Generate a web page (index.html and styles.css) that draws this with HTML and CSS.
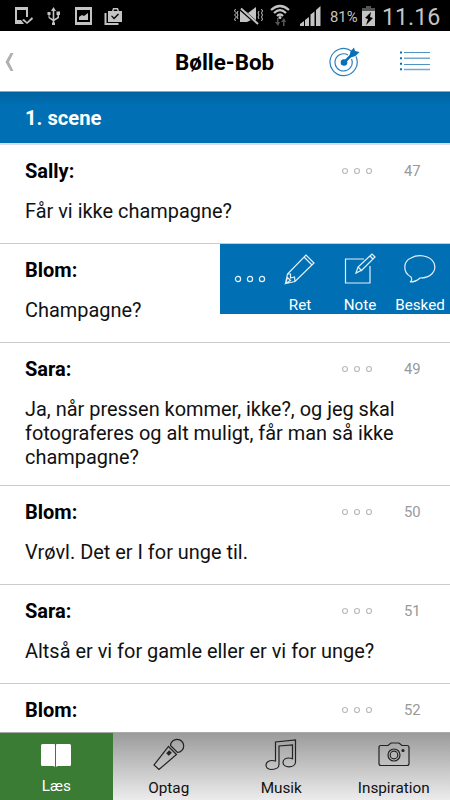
FILE: index.html
```html
<!DOCTYPE html>
<html lang="da">
<head>
<meta charset="utf-8">
<meta name="viewport" content="width=device-width">
<title>Bølle-Bob</title>
<link rel="stylesheet" href="styles.css">
</head>
<body>
<div class="status">
  <svg class="status-left" width="125" height="31" viewBox="0 0 125 31" fill="#c4c4c4">
    <path d="M15 7h13v10h-2V10h-9v10h4l3 4h-9zM22 20l2-1 3 3 5-5 1 2-6 5z"/>
    <path d="M53.500 7l2.500 4h-1.700v8l3.200-2v-2h-1v-3.500h3.500V15h-1v3l-4.700 3v1.500h.7v2.500h-3v-2.500h.7V21L48.500 18v-3h-1v-3h3v3h-1v2l3.200 2v-8H51z"/>
    <path fill-rule="evenodd" d="M75 7h17v18H75zM77 10v12h13V10zM79 20v-3l3-2 2 1 4-3v7z"/>
    <path fill-rule="evenodd" d="M108 11h4l1-3h5l1 3h3v11h-14zM113.500 11h4l-.5-1.500h-3zM111 16l3 3.500 5-5-1-1-4 4-2-2z"/>
    <path d="M104.500 13h2v10h12v2h-14z"/>
  </svg>
  <svg class="status-right" width="93" height="31" viewBox="232 0 93 31" fill="#c4c4c4">
    <path d="M240 11h5l3 2 8-6v15l-5-2-4 2h-7z"/>
    <path d="M240 8.500l17 15" stroke="#000" stroke-width="3.500"/>
    <path d="M241 8.500l17 15.500" stroke="#c4c4c4" stroke-width="2"/>
    <path d="M235.500 9l-1 2 2 2-2 2 2 2-2 2 1 2M238 11l-1 2 1 2-1 2 1 2M259 11l-1 2 1 2-1 2 1 2M261.500 9l1 2-1 2 1 2-1 2 1 2-1 2" fill="none" stroke="#c4c4c4"/>
    <path d="M271 10q9-8 18 0M274 13q6-6 12 0M277 16q3-3 6 0" fill="none" stroke="#c4c4c4" stroke-width="2.200"/>
    <circle cx="280" cy="17.500" r="1.500"/>
    <path d="M277 18v4h-2l3 4 2-4h-1.500v-4zM283 26v-4h-2l3-4 2 4h-1.500v4z" fill="#555"/>
    <path d="M300 26v-2l4-3v5zM305 26v-6l4-3v9zM310.500 26V14.500l4-3V26zM316 26V10l4.500-4v20z"/>
  </svg>
  <span class="percent">81%</span>
  <svg class="battery" width="15" height="21" viewBox="0 0 15 21">
    <path d="M5 0h5v2h4v4H1V2h4z" fill="#555"/><path d="M1 5h13v15H1z" fill="#c4c4c4"/>
    <path d="M10 6l-6 6 3 1-2 6 7-7-3-1z" fill="#000"/>
  </svg>
  <span class="clock">11.16</span>
</div>
<header class="bar">
  <svg class="back" width="16" height="24" viewBox="0 0 16 24"><path d="M10.500 3h3L9 12l4.500 9h-3L5.500 12z" fill="#b0b0b0"/></svg>
  <h1 class="title">Bølle-Bob</h1>
  <svg class="target" width="32" height="32" viewBox="0 0 32 32" fill="none" stroke="#2b80bc" stroke-width="1.200">
    <path d="M22.500 6A13.600 13.600 0 1 0 27 11.500M19 10A8.600 8.600 0 1 0 22.500 14"/>
    <circle cx="15" cy="17.500" r="3.300" fill="#0a70b5" stroke="none"/>
    <path d="M15 17.500L24 8.500" stroke="#0a70b5" stroke-width="2.500"/>
    <path d="M20 13l1.500-6.500 3.500-4 1 3.500 4.500 1-4 4z" fill="#0a70b5" stroke="none"/>
  </svg>
  <svg class="list" width="32" height="22" viewBox="0 0 32 22">
    <path d="M5 3.500h26M5 15.500h26" stroke="#4e93c4" stroke-width="1.200"/><path d="M5 9.200h26M5 20.500h26" stroke="#75a9cf" stroke-width="1.500"/>
    <path d="M1 3.500h2M1 9.200h2M1 14.800h2M1 20.300h2" stroke="#0a70b5" stroke-width="2"/>
  </svg>
</header>
<h2 class="scene">1. scene</h2>
<main class="lines">
  <article class="row">
    <div class="head"><b>Sally:</b><svg class="dots" viewBox="0 0 32 8"><circle cx="4" cy="4" r="2.500"/><circle cx="16" cy="4" r="2.500"/><circle cx="28" cy="4" r="2.500"/></svg><span class="num">47</span></div>
    <p>Får vi ikke champagne?</p>
  </article>
  <article class="row">
    <div class="head"><b>Blom:</b></div>
    <p>Champagne?</p>
    <div class="menu">
      <svg class="more" viewBox="0 0 32 8"><circle cx="4" cy="4" r="2.600"/><circle cx="16" cy="4" r="2.600"/><circle cx="28" cy="4" r="2.600"/></svg>
      <div class="action"><svg width="34" height="34" viewBox="0 0 34 34"><path d="M2.500 31.500L4.500 22 23 3l8 8-19 18.500zM21 5l8 8M4.500 22l3 0 0 4 4-1 .5 4.500M2.500 31.500l5-3-3-3z"/></svg><span>Ret</span></div>
      <div class="action"><svg width="34" height="34" viewBox="0 0 34 34"><path d="M21 7H2.500v24H27V14M13 21l2-6L29 2l3 3-13 13zM15 15l4 4M27 4l3 3"/></svg><span>Note</span></div>
      <div class="action"><svg width="34" height="34" viewBox="0 0 34 34"><path d="M8 25C-1 20 .5 9 8 6c7-4 19-3 23 5 3 8-3 15-14 15-2 2-6 4-10 4 2-1 2-3 1-5z"/></svg><span>Besked</span></div>
    </div>
  </article>
  <article class="row">
    <div class="head"><b>Sara:</b><svg class="dots" viewBox="0 0 32 8"><circle cx="4" cy="4" r="2.500"/><circle cx="16" cy="4" r="2.500"/><circle cx="28" cy="4" r="2.500"/></svg><span class="num">49</span></div>
    <p>Ja, når pressen kommer, ikke?, og jeg skal fotograferes og alt muligt, får man så ikke champagne?</p>
  </article>
  <article class="row">
    <div class="head"><b>Blom:</b><svg class="dots" viewBox="0 0 32 8"><circle cx="4" cy="4" r="2.500"/><circle cx="16" cy="4" r="2.500"/><circle cx="28" cy="4" r="2.500"/></svg><span class="num">50</span></div>
    <p>Vrøvl. Det er I for unge til.</p>
  </article>
  <article class="row">
    <div class="head"><b>Sara:</b><svg class="dots" viewBox="0 0 32 8"><circle cx="4" cy="4" r="2.500"/><circle cx="16" cy="4" r="2.500"/><circle cx="28" cy="4" r="2.500"/></svg><span class="num">51</span></div>
    <p>Altså er vi for gamle eller er vi for unge?</p>
  </article>
  <article class="row">
    <div class="head"><b>Blom:</b><svg class="dots" viewBox="0 0 32 8"><circle cx="4" cy="4" r="2.500"/><circle cx="16" cy="4" r="2.500"/><circle cx="28" cy="4" r="2.500"/></svg><span class="num">52</span></div>
  </article>
</main>
<nav class="tabs">
  <a class="tab active"><svg width="34" height="34" viewBox="0 0 34 34"><path d="M3.500 5H15q1 0 1 1v22q-1-1-2-1H3.500Q2 27 2 25.500v-19Q2 5 3.500 5zM18 5h12.500q1.500 0 1.500 1.500v19q0 1.500-1.500 1.500H19q-1 0-2 1V6q0-1 1-1z"/></svg><span>Læs</span></a>
  <a class="tab"><svg width="34" height="34" viewBox="0 0 34 34"><path d="M16.500 8.500l8 8L7 31.500 2 27zM18.500 7.500a6.600 6.600 0 1 1 7 7z"/><path d="M15.500 16.500l3-3" stroke-width="3.500"/></svg><span>Optag</span></a>
  <a class="tab"><svg width="34" height="34" viewBox="0 0 34 34"><path d="M11.500 23V4l20-2v22c0 3-3 4.800-6.500 4.800s-6-1.800-6-4.300 2.500-4.500 6-4.500c1.500 0 2.500.3 3.500.8V7l-13.500 1v18.500c0 3-3 5-7 5s-6-2-6-4.500 3-4.500 6-4.500c1.500 0 2.500.2 3.500.5z"/></svg><span>Musik</span></a>
  <a class="tab"><svg width="34" height="34" viewBox="0 0 34 34"><path d="M4 7.500h7l3-2.500h8l3 2.500h5q2 0 2 2v16q0 2-2 2H4q-2 0-2-2v-16q0-2 2-2z"/><circle cx="17" cy="17" r="6"/><circle cx="17" cy="17" r="3.800"/><circle cx="26" cy="12.500" r="1" fill="#222"/></svg><span>Inspiration</span></a>
</nav>
</body>
</html>
```
FILE: styles.css
```css
* { box-sizing: border-box; }
body {
  margin: 0;
  width: 450px;
  height: 800px;
  overflow: hidden;
  display: flex;
  flex-direction: column;
  font-family: Roboto, sans-serif;
  font-size: 19.93px;
  color: #111;
  background: #fff;
}
svg { display: block; flex: none; }
.status {
  height: 31px;
  flex: none;
  display: flex;
  align-items: center;
  background: #000;
  color: #c4c4c4;
}
.status-right { margin-left: 107px; }
.percent { margin-left: 5px; width: 31px; font-size: 14.8px; padding-top: 3px; white-space: nowrap; }
.battery { margin-top: 1px; }
.clock { margin-left: 6px; font-size: 23.2px; padding-top: 2px; }
.bar {
  height: 60px;
  flex: none;
  display: flex;
  align-items: center;
  background: #fff;
}
.back { margin-top: 1px; }
.title {
  margin: 2px 0 0 159px;
  width: 154px;
  font-size: 22.4px;
  font-weight: 700;
  color: #000;
}
.target { margin-bottom: 1px; }
.list { margin-left: 38px; margin-bottom: 2px; }
.scene {
  height: 54px;
  flex: none;
  margin: 0;
  padding: 1px 25px 0;
  border-top: 1px solid #8fa9bc;
  border-bottom: 2px solid #dcdce3;
  background: linear-gradient(#0262a0, #006fb4 13px);
  color: #fff;
  font-size: 20.2px;
  font-weight: 700;
  line-height: 51px;
}
.lines { flex: 1; min-height: 0; overflow: hidden; }
.row {
  position: relative;
  min-height: 99px;
  padding: 14px 25px 15px;
  border-bottom: 1px solid #ccc;
}
.head { display: flex; align-items: center; height: 24px; }
.head b { flex: 1; font-size: 20px; color: #000; }
.dots { width: 32px; height: 8px; margin: 0 31px 1px 0; fill: none; stroke: #b8bcbe; stroke-width: 1.200; }
.num { width: 21px; font-size: 14.8px; color: #999; }
.row p { margin: 17px -10px 0 0; line-height: 24px; }
.menu {
  position: absolute;
  top: 0;
  right: 0;
  width: 230px;
  height: 70px;
  display: flex;
  background: #006fb4;
  color: #fff;
}
.menu svg { fill: none; stroke: #e7f1f8; stroke-width: 1.200; }
.more { width: 32px; height: 8px; margin: 31px 4px 0 14px; }
.action { width: 60px; display: flex; flex-direction: column; align-items: center; padding-top: 8px; font-size: 15.2px; }
.action span { line-height: 20px; margin-top: 9px; }
.tabs {
  height: 68px;
  flex: none;
  display: grid;
  grid-template-columns: repeat(4, 1fr);
  border-top: 1px solid #aaa;
  background: linear-gradient(#9b9b9b, #ececec);
}
.tab { display: flex; flex-direction: column; align-items: center; padding-top: 5px; font-size: 15.3px; color: #111; }
.tab svg { fill: none; stroke: #222; stroke-width: 1.200; }
.tab span { line-height: 20px; margin-top: 6px; }
.active { background: #3b7c34; color: #fff; }
.tab.active svg { margin-top: 1px; fill: #fff; stroke: none; }
.tab.active span { margin-top: 3px; }
```
